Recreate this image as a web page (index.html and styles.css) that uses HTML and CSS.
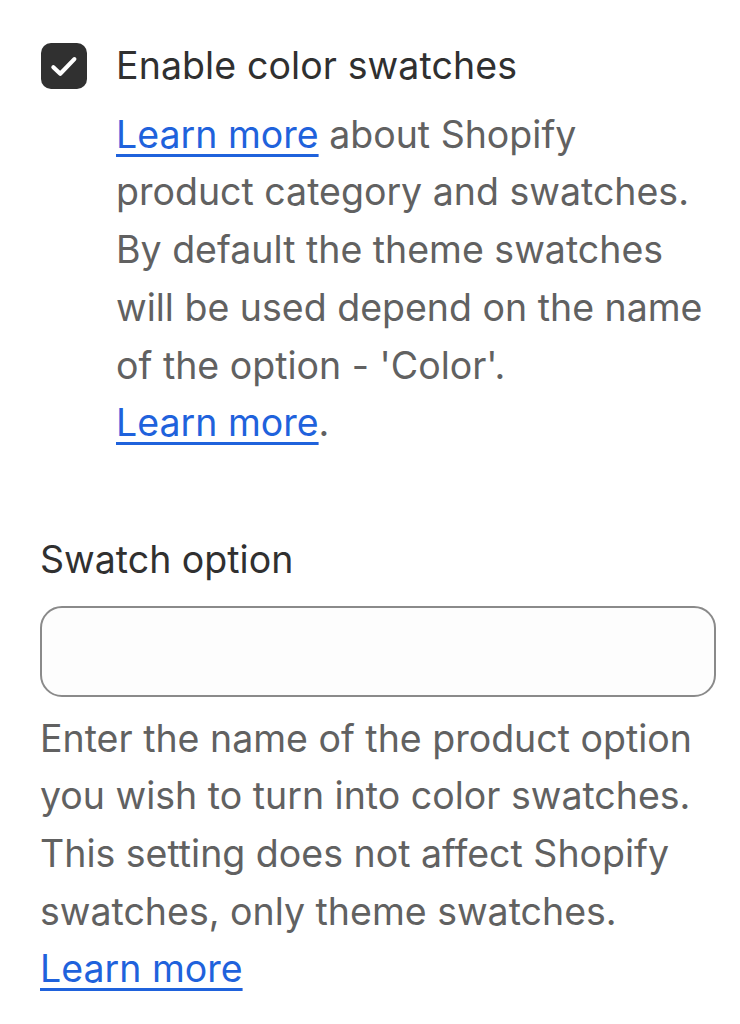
FILE: index.html
```html
<!DOCTYPE html>
<html lang="en">
<head>
  <meta charset="UTF-8" />
  <title>Swatch settings</title>
  <link rel="stylesheet" href="styles.css">
</head>
<body>
  <div class="settings">
    <div class="choice">
      <label class="choice-row">
        <span class="checkbox">
          <svg viewBox="0 0 16 16" width="46" height="46">
            <path d="M4.3 8.4l2.4 2.3L11.6 5.6" fill="none" stroke="#fff" stroke-width="1.45" stroke-linecap="round" stroke-linejoin="round"/>
          </svg>
        </span>
        <span class="choice-label">Enable color swatches</span>
      </label>
      <div class="choice-help">
        <a href="#">Learn more</a> about Shopify product category and swatches. By default the theme swatches will be used depend on the name of the option - 'Color'.<br>
        <a href="#">Learn more</a>.
      </div>
    </div>

    <div class="field">
      <label class="field-label" for="swatch">Swatch option</label>
      <input class="field-input" id="swatch" type="text">
      <div class="field-help">
        Enter the name of the product option you wish to turn into color swatches. This setting does not affect Shopify swatches, only theme swatches.<br>
        <a href="#">Learn more</a>
      </div>
    </div>
  </div>
</body>
</html>
```

FILE: styles.css
```css
body {
  margin: 0;
  background: #ffffff;
  font-family: 'Inter', 'Noto Sans', sans-serif;
  font-size: 37.5px;
  line-height: 57.7px;
  color: #303030;
}

.settings {
  padding: 37px 24px 0 40px;
}

.choice-row {
  display: flex;
  align-items: center;
  gap: 29px;
}

.checkbox {
  width: 46px;
  height: 46px;
  flex: none;
  background: #303030;
  border-radius: 10px;
  display: flex;
  align-items: center;
  justify-content: center;
  margin-left: 1px;
}

.choice-label {
  font-weight: 400;
  letter-spacing: 0.1px;
}

.choice-help {
  margin-top: 11px;
  margin-left: 76px;
  color: #616161;
}

a {
  color: #1f62dc;
  text-decoration: underline;
  text-decoration-thickness: 3px;
  text-underline-offset: 6px;
}

.field {
  margin-top: 79px;
}

.field-label {
  display: block;
  font-weight: 400;
}

.field-input {
  display: block;
  box-sizing: border-box;
  width: 676px;
  height: 91px;
  margin-top: 17px;
  border: 2px solid #8a8a8a;
  border-radius: 22px;
  background: #fdfdfd;
  font: inherit;
}

.field-help {
  margin-top: 13px;
  color: #616161;
}
```
